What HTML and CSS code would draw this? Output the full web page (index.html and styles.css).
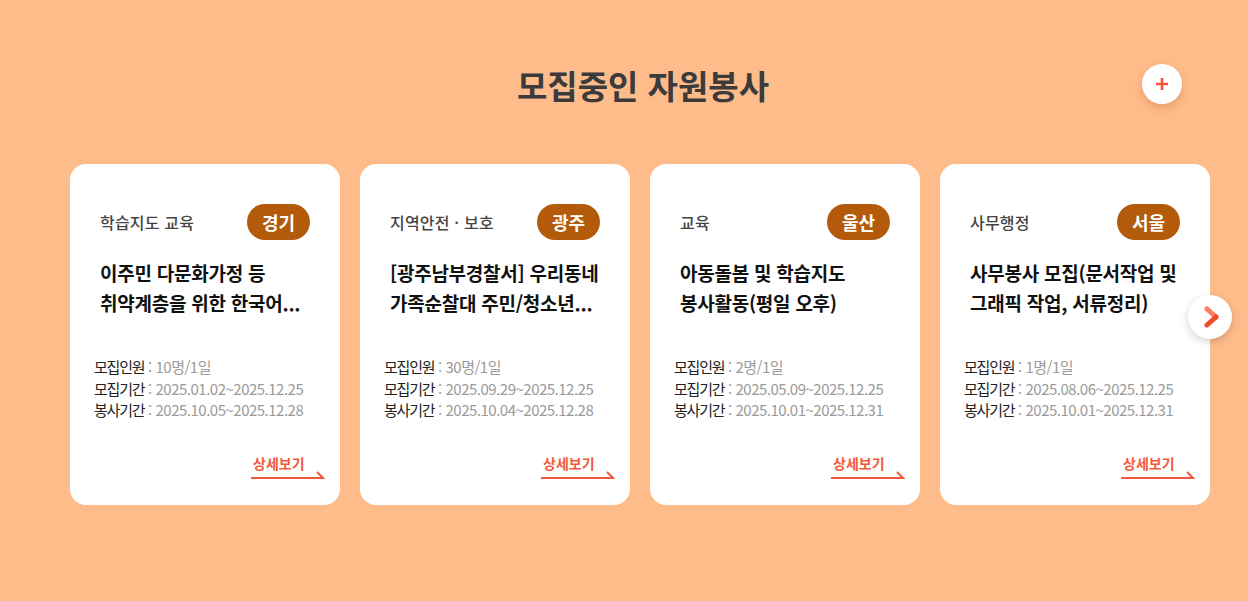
FILE: index.html
```html
<!DOCTYPE html>
<html lang="ko">
<head>
    <meta charset="UTF-8">
    <meta name="viewport" content="width=device-width, initial-scale=1.0">
    <title>모집중인 자원봉사</title>
    <link rel="stylesheet" href="styles.css">
</head>
<body>
    <section class="volunteer">
        <div class="section-head">
            <h2>모집중인 자원봉사</h2>
            <button class="more-btn" aria-label="더보기">
                <svg width="14" height="14" viewBox="0 0 14 14"><path d="M7 1V13M1 7H13" stroke="#f0553a" stroke-width="2.6"/></svg>
            </button>
        </div>

        <div class="card-list">
            <div class="card">
                <div class="card-top">
                    <span class="category">학습지도 교육</span>
                    <span class="badge">경기</span>
                </div>
                <p class="card-title">이주민 다문화가정 등 취약계층을 위한 한국어...</p>
                <ul class="info">
                    <li><b>모집인원</b> : 10명/1일</li>
                    <li><b>모집기간</b> : 2025.01.02~2025.12.25</li>
                    <li><b>봉사기간</b> : 2025.10.05~2025.12.28</li>
                </ul>
                <div class="card-foot">
                    <a class="detail-link" href="#">상세보기
                        <svg width="74" height="8" viewBox="0 0 74 8"><path d="M0 7H72L66 1" fill="none" stroke="#f05a3a" stroke-width="2"/></svg>
                    </a>
                </div>
            </div>

            <div class="card">
                <div class="card-top">
                    <span class="category">지역안전 · 보호</span>
                    <span class="badge">광주</span>
                </div>
                <p class="card-title">[광주남부경찰서] 우리동네 가족순찰대 주민/청소년...</p>
                <ul class="info">
                    <li><b>모집인원</b> : 30명/1일</li>
                    <li><b>모집기간</b> : 2025.09.29~2025.12.25</li>
                    <li><b>봉사기간</b> : 2025.10.04~2025.12.28</li>
                </ul>
                <div class="card-foot">
                    <a class="detail-link" href="#">상세보기
                        <svg width="74" height="8" viewBox="0 0 74 8"><path d="M0 7H72L66 1" fill="none" stroke="#f05a3a" stroke-width="2"/></svg>
                    </a>
                </div>
            </div>

            <div class="card">
                <div class="card-top">
                    <span class="category">교육</span>
                    <span class="badge">울산</span>
                </div>
                <p class="card-title">아동돌봄 및 학습지도 봉사활동(평일 오후)</p>
                <ul class="info">
                    <li><b>모집인원</b> : 2명/1일</li>
                    <li><b>모집기간</b> : 2025.05.09~2025.12.25</li>
                    <li><b>봉사기간</b> : 2025.10.01~2025.12.31</li>
                </ul>
                <div class="card-foot">
                    <a class="detail-link" href="#">상세보기
                        <svg width="74" height="8" viewBox="0 0 74 8"><path d="M0 7H72L66 1" fill="none" stroke="#f05a3a" stroke-width="2"/></svg>
                    </a>
                </div>
            </div>

            <div class="card">
                <div class="card-top">
                    <span class="category">사무행정</span>
                    <span class="badge">서울</span>
                </div>
                <p class="card-title">사무봉사 모집(문서작업 및 그래픽 작업, 서류정리)</p>
                <ul class="info">
                    <li><b>모집인원</b> : 1명/1일</li>
                    <li><b>모집기간</b> : 2025.08.06~2025.12.25</li>
                    <li><b>봉사기간</b> : 2025.10.01~2025.12.31</li>
                </ul>
                <div class="card-foot">
                    <a class="detail-link" href="#">상세보기
                        <svg width="74" height="8" viewBox="0 0 74 8"><path d="M0 7H72L66 1" fill="none" stroke="#f05a3a" stroke-width="2"/></svg>
                    </a>
                </div>
            </div>

            <!-- next slide -->
            <button class="next-btn" aria-label="다음">
                <svg width="16" height="22" viewBox="0 0 16 22">
                    <path d="M3 3L12 11" stroke="#ff7c5c" stroke-width="5" stroke-linecap="round"/>
                    <path d="M12 11L3 19" stroke="#f04a28" stroke-width="5" stroke-linecap="round"/>
                </svg>
            </button>
        </div>
    </section>
</body>
</html>
```

FILE: styles.css
```css
* {
    margin: 0;
    padding: 0;
    box-sizing: border-box;
    font-family: "Noto Sans CJK KR", "Noto Sans", sans-serif;
}

body {
    background: #ffbc8b;
    width: 1248px;
    height: 601px;
    overflow: hidden;
}

.volunteer {
    padding-top: 60px;
}

.section-head {
    position: relative;
    height: 50px;
    text-align: center;
}

.section-head h2 {
    padding-left: 38px;
    font-size: 33px;
    line-height: 50px;
    font-weight: 700;
    color: #3b3b3b;
}

.more-btn {
    position: absolute;
    top: 4px;
    right: 66px;
    width: 40px;
    height: 40px;
    border: none;
    border-radius: 50%;
    background: #fff;
    box-shadow: 0 4px 10px rgba(150, 70, 20, 0.25);
    display: flex;
    align-items: center;
    justify-content: center;
    cursor: pointer;
}

.card-list {
    position: relative;
    display: flex;
    gap: 20px;
    margin-top: 54px;
    padding-left: 70px;
}

.card {
    width: 270px;
    height: 341px;
    background: #fff;
    border-radius: 16px;
    padding: 40px 30px 0 30px;
    display: flex;
    flex-direction: column;
}

.card-top {
    display: flex;
    justify-content: space-between;
    align-items: center;
    height: 36px;
}

.category {
    font-size: 16px;
    font-weight: 500;
    color: #444;
    letter-spacing: 0.2px;
}

.badge {
    height: 36px;
    line-height: 36px;
    padding: 0 15px;
    border-radius: 18px;
    background: #b35a0b;
    color: #fff;
    font-size: 18px;
    font-weight: 700;
}

.card-title {
    margin: 18px -10px 0 0;
    height: 60px;
    font-size: 19px;
    line-height: 30px;
    font-weight: 700;
    color: #111;
    letter-spacing: -0.25px;
    word-break: keep-all;
}

.info {
    list-style: none;
    margin: 38px 0 0 -6px;
    font-size: 15px;
    line-height: 21.5px;
    color: #9a9a9a;
    letter-spacing: -0.5px;
}

.info b {
    font-weight: 400;
    color: #222;
    letter-spacing: -1.2px;
}

.card-foot {
    display: flex;
    justify-content: flex-end;
    margin: 34px -15px 0 0;
}

.detail-link {
    display: flex;
    flex-direction: column;
    align-items: flex-start;
    text-decoration: none;
    color: #f05a3a;
    font-size: 14px;
    line-height: 16px;
    font-weight: 700;
    padding-left: 2px;
}

.detail-link svg {
    display: block;
    margin: 0 0 0 -2px;
}

.next-btn {
    position: absolute;
    top: 131px;
    left: 1188px;
    width: 44px;
    height: 44px;
    border: none;
    border-radius: 50%;
    background: #fff;
    box-shadow: 0 3px 8px rgba(0, 0, 0, 0.18);
    display: flex;
    align-items: center;
    justify-content: center;
    padding-left: 4px;
    cursor: pointer;
}
```
